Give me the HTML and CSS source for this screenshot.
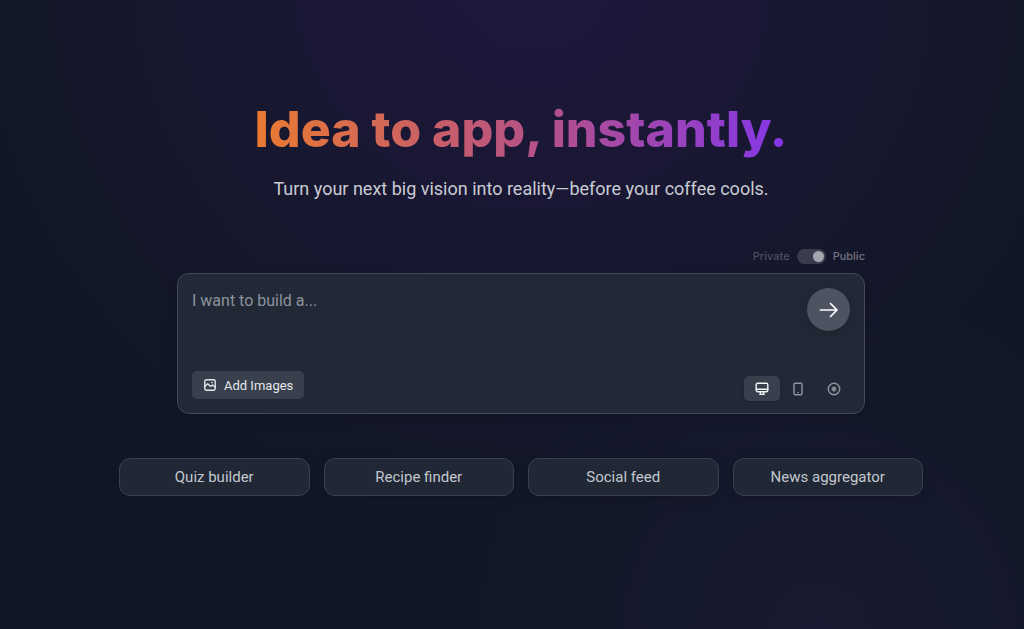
FILE: index.html
```html
<!DOCTYPE html>
<html lang="en">

<head>
  <meta charset="UTF-8" />
  <meta name="viewport" content="width=device-width, initial-scale=1.0" />
  <title>Idea to app, instantly.</title>
  <link rel="stylesheet" href="styles.css">
</head>

<body>
  <main class="hero">
    <h1 class="title">Idea to app, instantly.</h1>
    <p class="subtitle">Turn your next big vision into reality—before your coffee cools.</p>

    <form class="prompt">
      <div class="visibility">
        <label class="private" for="publicToggle">Private</label>
        <input class="switch" type="checkbox" id="publicToggle" name="public" checked>
        <label for="publicToggle">Public</label>
      </div>

      <div class="card">
        <div class="card-top">
          <textarea class="prompt-input" name="prompt" placeholder="I want to build a..." aria-label="Prompt"></textarea>
          <button class="submit" type="submit" aria-label="Build">
            <svg width="20" height="20" viewBox="0 0 20 20">
              <path d="M1.5 10H18M11.5 3.5L18 10L11.5 16.5" />
            </svg>
          </button>
        </div>

        <div class="card-bottom">
          <button class="add-images" type="button">
            <svg width="12" height="12" viewBox="0 0 12 12">
              <rect x="0.8" y="0.8" width="10.4" height="10.4" rx="1.6" />
              <path d="M1 7.2L3.7 4.8L6.6 7.4L8.4 6L11 8M7.8 3.6h.6" />
            </svg>
            Add Images
          </button>

          <div class="devices">
            <button class="device active" type="button" aria-label="Desktop">
              <svg width="14" height="14" viewBox="0 0 14 14">
                <rect x="1.2" y="1.2" width="11.6" height="8.6" rx="1.5" />
                <path d="M1.2 7.2h11.6M5.4 10v2.2M8.6 10v2.2M4.8 12.4h4.4" />
              </svg>
            </button>
            <button class="device" type="button" aria-label="Mobile">
              <svg width="14" height="14" viewBox="0 0 14 14">
                <rect x="3" y="1.2" width="8" height="11.6" rx="1.4" />
                <path d="M6.8 10.6h.4" />
              </svg>
            </button>
            <button class="device" type="button" aria-label="Auto">
              <svg width="14" height="14" viewBox="0 0 14 14">
                <circle cx="7" cy="7" r="5.7" />
                <path d="M7 4.8v4.4M5.1 5.9l3.8 2.2M5.1 8.1l3.8-2.2" />
              </svg>
            </button>
          </div>
        </div>
      </div>
    </form>

    <div class="suggestions">
      <button type="button">Quiz builder</button>
      <button type="button">Recipe finder</button>
      <button type="button">Social feed</button>
      <button type="button">News aggregator</button>
    </div>
  </main>
</body>

</html>
```
FILE: styles.css
```css
* {
  box-sizing: border-box;
}

body {
  margin: 0;
  min-height: 100vh;
  font-family: Roboto, "Liberation Sans", sans-serif;
  color: #c9cbd3;
  background-color: #111725;
  background-image:
    radial-gradient(circle at 52% -5%, rgba(56, 24, 105, 0.36), rgba(56, 24, 105, 0) 560px),
    radial-gradient(circle at 80% 100%, rgba(49, 35, 90, 0.22), rgba(49, 35, 90, 0) 340px);
}

button {
  font-family: inherit;
  border: none;
  margin: 0;
  padding: 0;
  color: inherit;
  cursor: pointer;
}

svg {
  display: block;
  fill: none;
  stroke: currentColor;
  stroke-width: 1.4;
  stroke-linecap: round;
  stroke-linejoin: round;
}

.hero {
  display: flex;
  flex-direction: column;
  align-items: center;
  padding: 96px 0 48px 18px;
}

.title {
  margin: 0;
  font-family: Inter, "Liberation Sans", sans-serif;
  font-size: 50px;
  font-weight: 800;
  line-height: 66px;
  color: transparent;
  background: linear-gradient(to right, #ea7a30, #b85382 50%, #8436e8);
  background-clip: text;
  -webkit-background-clip: text;
}

.subtitle {
  margin: 14px 0 0;
  font-size: 18px;
  line-height: 26px;
}

.prompt {
  width: 86%;
  max-width: 688px;
  margin-top: 46px;
}

.visibility {
  display: flex;
  justify-content: flex-end;
  align-items: center;
  gap: 7px;
  height: 16px;
  margin-bottom: 9px;
  font-family: Inter, "Liberation Sans", sans-serif;
  font-size: 11px;
  font-weight: 500;
  color: #73747f;
}

.visibility .private {
  color: #4e4f5e;
}

.switch {
  appearance: none;
  width: 29px;
  height: 15px;
  margin: 0;
  padding: 2px;
  border-radius: 8px;
  background-color: #3b3c4b;
  cursor: pointer;
}

.switch::before {
  content: "";
  display: block;
  width: 11px;
  height: 11px;
  border-radius: 50%;
  background-color: #a5a5b0;
}

.switch:checked::before {
  margin-left: auto;
}

.card {
  padding: 12px;
  border: 1px solid #434956;
  border-radius: 12px;
  background-color: #222936;
  box-shadow: 0 4px 12px rgba(0, 0, 0, 0.15);
}

.card-top {
  display: flex;
  align-items: flex-start;
  gap: 16px;
  padding: 2px;
}

.prompt-input {
  flex: 1;
  height: 81px;
  margin: 0;
  padding: 2px 0;
  border: none;
  outline: none;
  resize: none;
  background: none;
  font-family: inherit;
  font-size: 16px;
  line-height: 22px;
  color: #d1d5db;
}

.prompt-input::placeholder {
  color: #8c919c;
}

.submit {
  display: grid;
  place-items: center;
  width: 43px;
  height: 43px;
  border-radius: 50%;
  background-color: #4d5361;
  color: #ffffff;
  box-shadow: 0 2px 8px rgba(0, 0, 0, 0.2);
}

.submit svg {
  stroke-width: 1.7;
}

.card-bottom {
  display: flex;
  justify-content: space-between;
  align-items: flex-end;
}

.add-images {
  display: flex;
  align-items: center;
  gap: 8px;
  height: 28px;
  margin: 0 2px 2px;
  padding: 0 11px 0 12px;
  border-radius: 5px;
  background-color: #39404d;
  color: #e5e7eb;
  font-size: 13px;
}

.devices {
  display: flex;
}

.device {
  display: grid;
  place-items: center;
  width: 36px;
  height: 25px;
  border-radius: 5px;
  background: none;
  color: #8f949e;
}

.device.active {
  background-color: #39404d;
  color: #f3f4f6;
  box-shadow: 0 1px 3px rgba(0, 0, 0, 0.2);
}

.suggestions {
  display: grid;
  grid-template-columns: repeat(4, 1fr);
  gap: 14px;
  width: 90%;
  max-width: 804px;
  margin-top: 44px;
}

.suggestions button {
  height: 38px;
  border: 1px solid #374151;
  border-radius: 11px;
  background-color: #212835;
  color: #c3c7ce;
  font-size: 15px;
  box-shadow: 0 3px 8px rgba(0, 0, 0, 0.15);
}

.suggestions button:hover,
.add-images:hover {
  background-color: #434a58;
}
```
